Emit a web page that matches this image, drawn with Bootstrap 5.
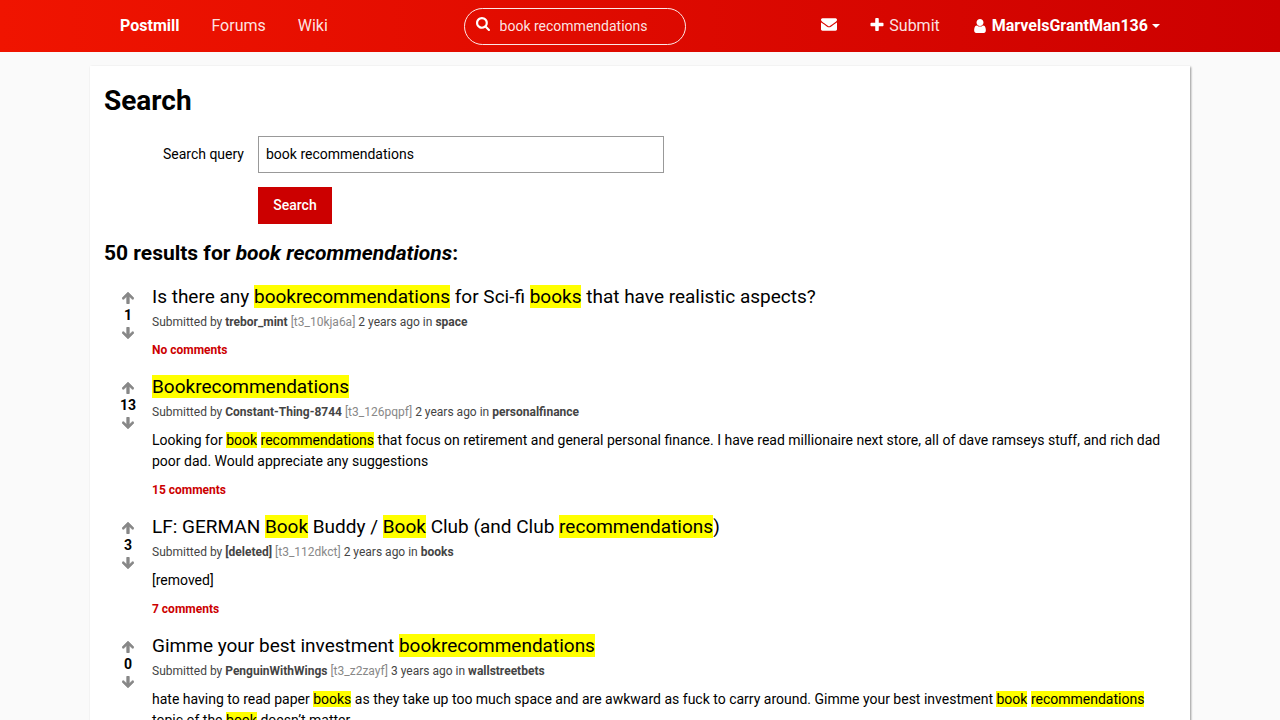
<!DOCTYPE html>
<html lang="en">
<head>
<meta charset="utf-8">
<meta name="viewport" content="width=device-width, initial-scale=1">
<title>Search - Postmill</title>
<link rel="stylesheet" href="https://cdn.jsdelivr.net/npm/bootstrap@5.3.0/dist/css/bootstrap.min.css">
<style>
  body { font-family: Roboto, "Liberation Sans", sans-serif; font-size: 14px; line-height: 21px; color: #000; background: #fafafa; }
  a { color: inherit; text-decoration: none; }
  svg { fill: currentColor; }
  .wrapper { max-width: 1100px; }
  .site-header { background: linear-gradient(to right, #f10, #e00c00 40%, #c00); background: linear-gradient(to right, #f01400, #c00); color: #fff; font-size: 16px; min-height: 52px; }
  .site-header nav { padding: 0 14px; }
  .site-header .nav-link { padding: 14px 16px; line-height: 24px; color: rgba(255,255,255,.9); }
  .site-header .nav-link.strong { font-weight: 700; color: #fff; }
  .site-header .nav-link svg { color: #fff; }
  .site-search { width: 222px; height: 37px; border: 1px solid rgba(255,255,255,.9); border-radius: 19px; padding: 0 11px; }
  .site-search input { background: none; border: 0; outline: 0; color: rgba(255,255,255,.9); font-size: 14px; padding: 0; min-width: 0; }
  .site-search label { padding: 0 10px 4px 0; }
  .caret { border: 4px solid transparent; border-top-color: currentColor; border-bottom: 0; }
  .panel { background: #fff; margin-top: 14px; padding: 14px; box-shadow: 1px 1px 2px rgba(0,0,0,.4); min-height: 100vh; }
  h1 { font-size: 28px; line-height: 42px; font-weight: 700; margin-bottom: 14px; }
  h2 { font-size: 21px; line-height: 30px; font-weight: 700; margin: 14px 0; }
  .form-grid { display: grid; grid-template-columns: 140px minmax(0, 406px); gap: 14px; }
  .form-grid .form-control { height: 37px; border-radius: 0; border-color: #999; padding: 0 7px 2px; font-size: 14px; color: #000; }
  .btn-search { min-width: 74px; height: 37px; border: 0; border-radius: 0; background: #c00; color: #fff; font-size: 14px; font-weight: 500; padding: 0 15px; }
  .btn-search:hover { background: #a00; color: #fff; }
  .post { margin-bottom: 13px; }
  .vote { width: 48px; padding-top: 9px; }
  .vote button { border: 0; background: none; padding: 0; color: #888; line-height: 12px; height: 12px; display: block; }
  .vote span { font-weight: 700; line-height: 21px; padding-top: 2px; }
  .post h3 { font-size: 19px; line-height: 27px; font-weight: 400; margin: 0; padding-top: 1px; }
  .post mark { background: #ff0; color: inherit; padding: 0; }
  .meta { font-size: 12px; line-height: 18px; margin: 3px 0 0; color: #444; }
  .meta .tag { color: #888; }
  .excerpt { margin: 9px 0 0; }
  .comments { font-size: 12px; line-height: 18px; margin-top: 10px; font-weight: 700; color: #c00; }
  .excerpt + .comments { margin-top: 9px; }
</style>
</head>
<body>
<svg class="d-none" aria-hidden="true">
  <symbol id="up" viewBox="0 0 12 12"><path d="M6 0 11.600 5.600Q12.200 6.400 11.600 7.100 10.700 7.900 9.900 7.100L7.400 4.700V11.200Q7.400 12 6.600 12H5.400Q4.600 12 4.600 11.200V4.700L2.100 7.100Q1.300 7.900.4 7.100-.2 6.400.4 5.600Z" stroke="currentColor" stroke-width=".5"/></symbol>
  <symbol id="down" viewBox="0 0 12 12"><path transform="matrix(1 0 0 -1 0 12)" d="M6 0 11.600 5.600Q12.200 6.400 11.600 7.100 10.700 7.900 9.900 7.100L7.400 4.700V11.200Q7.400 12 6.600 12H5.400Q4.600 12 4.600 11.200V4.700L2.100 7.100Q1.300 7.900.4 7.100-.2 6.400.4 5.600Z" stroke="currentColor" stroke-width=".5"/></symbol>
</svg>

<header class="site-header">
  <nav class="wrapper container-fluid d-flex align-items-center justify-content-between">
    <div class="d-flex">
      <a class="nav-link strong" href="#">Postmill</a>
      <a class="nav-link" href="#">Forums</a>
      <a class="nav-link" href="#">Wiki</a>
    </div>
    <form class="site-search d-flex align-items-center" role="search">
      <label for="q-top" class="d-flex"><svg width="14" height="14" viewBox="64 128 1664 1664" role="img" aria-label="Search"><path d="M1216 832q0-185-131.500-316.500t-316.500-131.500-316.500 131.500-131.500 316.500 131.500 316.500 316.500 131.500 316.500-131.500 131.500-316.500zm512 832q0 52-38 90t-90 38q-54 0-90-38l-343-342q-179 124-399 124-143 0-273.500-55.500t-225-150-150-225-55.500-273.500 55.500-273.500 150-225 225-150 273.500-55.500 273.500 55.500 225 150 150 225 55.500 273.500q0 220-124 399l343 343q37 37 37 90z"/></svg></label>
      <input id="q-top" class="flex-fill" type="text" value="book recommendations">
    </form>
    <div class="d-flex">
      <a class="nav-link d-flex align-items-center" href="#" aria-label="Messages"><svg class="mb-1" width="16" height="13" viewBox="0 256 1792 1408"><path d="M1792 710v794q0 66-47 113t-113 47h-1472q-66 0-113-47t-47-113v-794q44 49 101 87 362 246 497 345 57 42 92.500 65.500t94.500 48 110 24.500h2q51 0 110-24.500t94.500-48 92.500-65.500q170-123 498-345 57-39 100-87zm0-294q0 79-49 151t-122 123q-376 261-468 325-10 7-42.500 31t-54 38.500-52 32.500-57.500 27-50 9h-2q-23 0-50-9t-57.500-27-52-32.500-54-38.500-42.500-31q-91-64-262-182.500t-205-142.500q-62-42-117-115.500t-55-136.500q0-78 41.500-130t118.500-52h1472q65 0 112.500 47t47.500 113z"/></svg></a>
      <a class="nav-link d-flex align-items-center" href="#"><svg class="me-1 mb-1" width="16" height="13" viewBox="192 128 1408 1408"><path d="M1600 736v192q0 40-28 68t-68 28h-416v416q0 40-28 68t-68 28h-192q-40 0-68-28t-28-68v-416h-416q-40 0-68-28t-28-68v-192q0-40 28-68t68-28h416v-416q0-40 28-68t68-28h192q40 0 68 28t28 68v416h416q40 0 68 28t28 68z"/></svg>Submit</a>
      <a class="nav-link strong d-flex align-items-center" href="#"><svg class="me-1" width="16" height="14" viewBox="256 128 1280 1536"><path d="M1536 1399q0 109-62.500 187t-150.500 78h-854q-88 0-150.500-78t-62.500-187q0-85 8.500-160.500t31.500-152 58.500-131 94-89 134.500-34.500q131 128 313 128t313-128q76 0 134.500 34.500t94 89 58.500 131 31.500 152 8.500 160.500zm-256-887q0 159-112.500 271.500t-271.500 112.500-271.500-112.500-112.500-271.500 112.500-271.500 271.500-112.500 271.500 112.500 112.500 271.500z"/></svg>MarvelsGrantMan136<span class="caret ms-1"></span></a>
    </div>
  </nav>
</header>

<main class="wrapper container-fluid panel">
  <h1>Search</h1>
  <form class="form-grid">
    <label for="q" class="text-end align-self-center">Search query</label>
    <input id="q" class="form-control" type="text" value="book recommendations">
    <span></span>
    <div class="d-flex"><button class="btn btn-search" type="submit">Search</button></div>
  </form>
  <h2>50 results for <em>book recommendations</em>:</h2>

  <article class="post d-flex">
    <div class="vote d-flex flex-column align-items-center flex-shrink-0">
      <button type="button" aria-label="Upvote"><svg width="12" height="12"><use href="#up"/></svg></button><span>1</span><button type="button" aria-label="Downvote"><svg width="12" height="12"><use href="#down"/></svg></button>
    </div>
    <div class="flex-fill">
      <h3><a href="#">Is there any <mark>bookrecommendations</mark> for Sci-fi <mark>books</mark> that have realistic aspects?</a></h3>
      <p class="meta">Submitted by <a href="#"><b>trebor_mint</b></a> <span class="tag">[t3_10kja6a]</span> 2 years ago in <a href="#"><b>space</b></a></p>
      <div class="comments"><a href="#">No comments</a></div>
    </div>
  </article>

  <article class="post d-flex">
    <div class="vote d-flex flex-column align-items-center flex-shrink-0">
      <button type="button" aria-label="Upvote"><svg width="12" height="12"><use href="#up"/></svg></button><span>13</span><button type="button" aria-label="Downvote"><svg width="12" height="12"><use href="#down"/></svg></button>
    </div>
    <div class="flex-fill">
      <h3><a href="#"><mark>Bookrecommendations</mark></a></h3>
      <p class="meta">Submitted by <a href="#"><b>Constant-Thing-8744</b></a> <span class="tag">[t3_126pqpf]</span> 2 years ago in <a href="#"><b>personalfinance</b></a></p>
      <p class="excerpt">Looking for <mark>book</mark> <mark>recommendations</mark> that focus on retirement and general personal finance. I have read millionaire next store, all of dave ramseys stuff, and rich dad poor dad. Would appreciate any suggestions</p>
      <div class="comments"><a href="#">15 comments</a></div>
    </div>
  </article>

  <article class="post d-flex">
    <div class="vote d-flex flex-column align-items-center flex-shrink-0">
      <button type="button" aria-label="Upvote"><svg width="12" height="12"><use href="#up"/></svg></button><span>3</span><button type="button" aria-label="Downvote"><svg width="12" height="12"><use href="#down"/></svg></button>
    </div>
    <div class="flex-fill">
      <h3><a href="#">LF: GERMAN <mark>Book</mark> Buddy / <mark>Book</mark> Club (and Club <mark>recommendations</mark>)</a></h3>
      <p class="meta">Submitted by <b>[deleted]</b> <span class="tag">[t3_112dkct]</span> 2 years ago in <a href="#"><b>books</b></a></p>
      <p class="excerpt">[removed]</p>
      <div class="comments"><a href="#">7 comments</a></div>
    </div>
  </article>

  <article class="post d-flex">
    <div class="vote d-flex flex-column align-items-center flex-shrink-0">
      <button type="button" aria-label="Upvote"><svg width="12" height="12"><use href="#up"/></svg></button><span>0</span><button type="button" aria-label="Downvote"><svg width="12" height="12"><use href="#down"/></svg></button>
    </div>
    <div class="flex-fill">
      <h3><a href="#">Gimme your best investment <mark>bookrecommendations</mark></a></h3>
      <p class="meta">Submitted by <a href="#"><b>PenguinWithWings</b></a> <span class="tag">[t3_z2zayf]</span> 3 years ago in <a href="#"><b>wallstreetbets</b></a></p>
      <p class="excerpt pe-2">hate having to read paper <mark>books</mark> as they take up too much space and are awkward as fuck to carry around. Gimme your best investment <mark>book</mark> <mark>recommendations</mark> topic of the <mark>book</mark> doesn’t matter</p>
    </div>
  </article>
</main>
<script src="https://cdn.jsdelivr.net/npm/bootstrap@5.3.0/dist/js/bootstrap.bundle.min.js"></script>
</body>
</html>
